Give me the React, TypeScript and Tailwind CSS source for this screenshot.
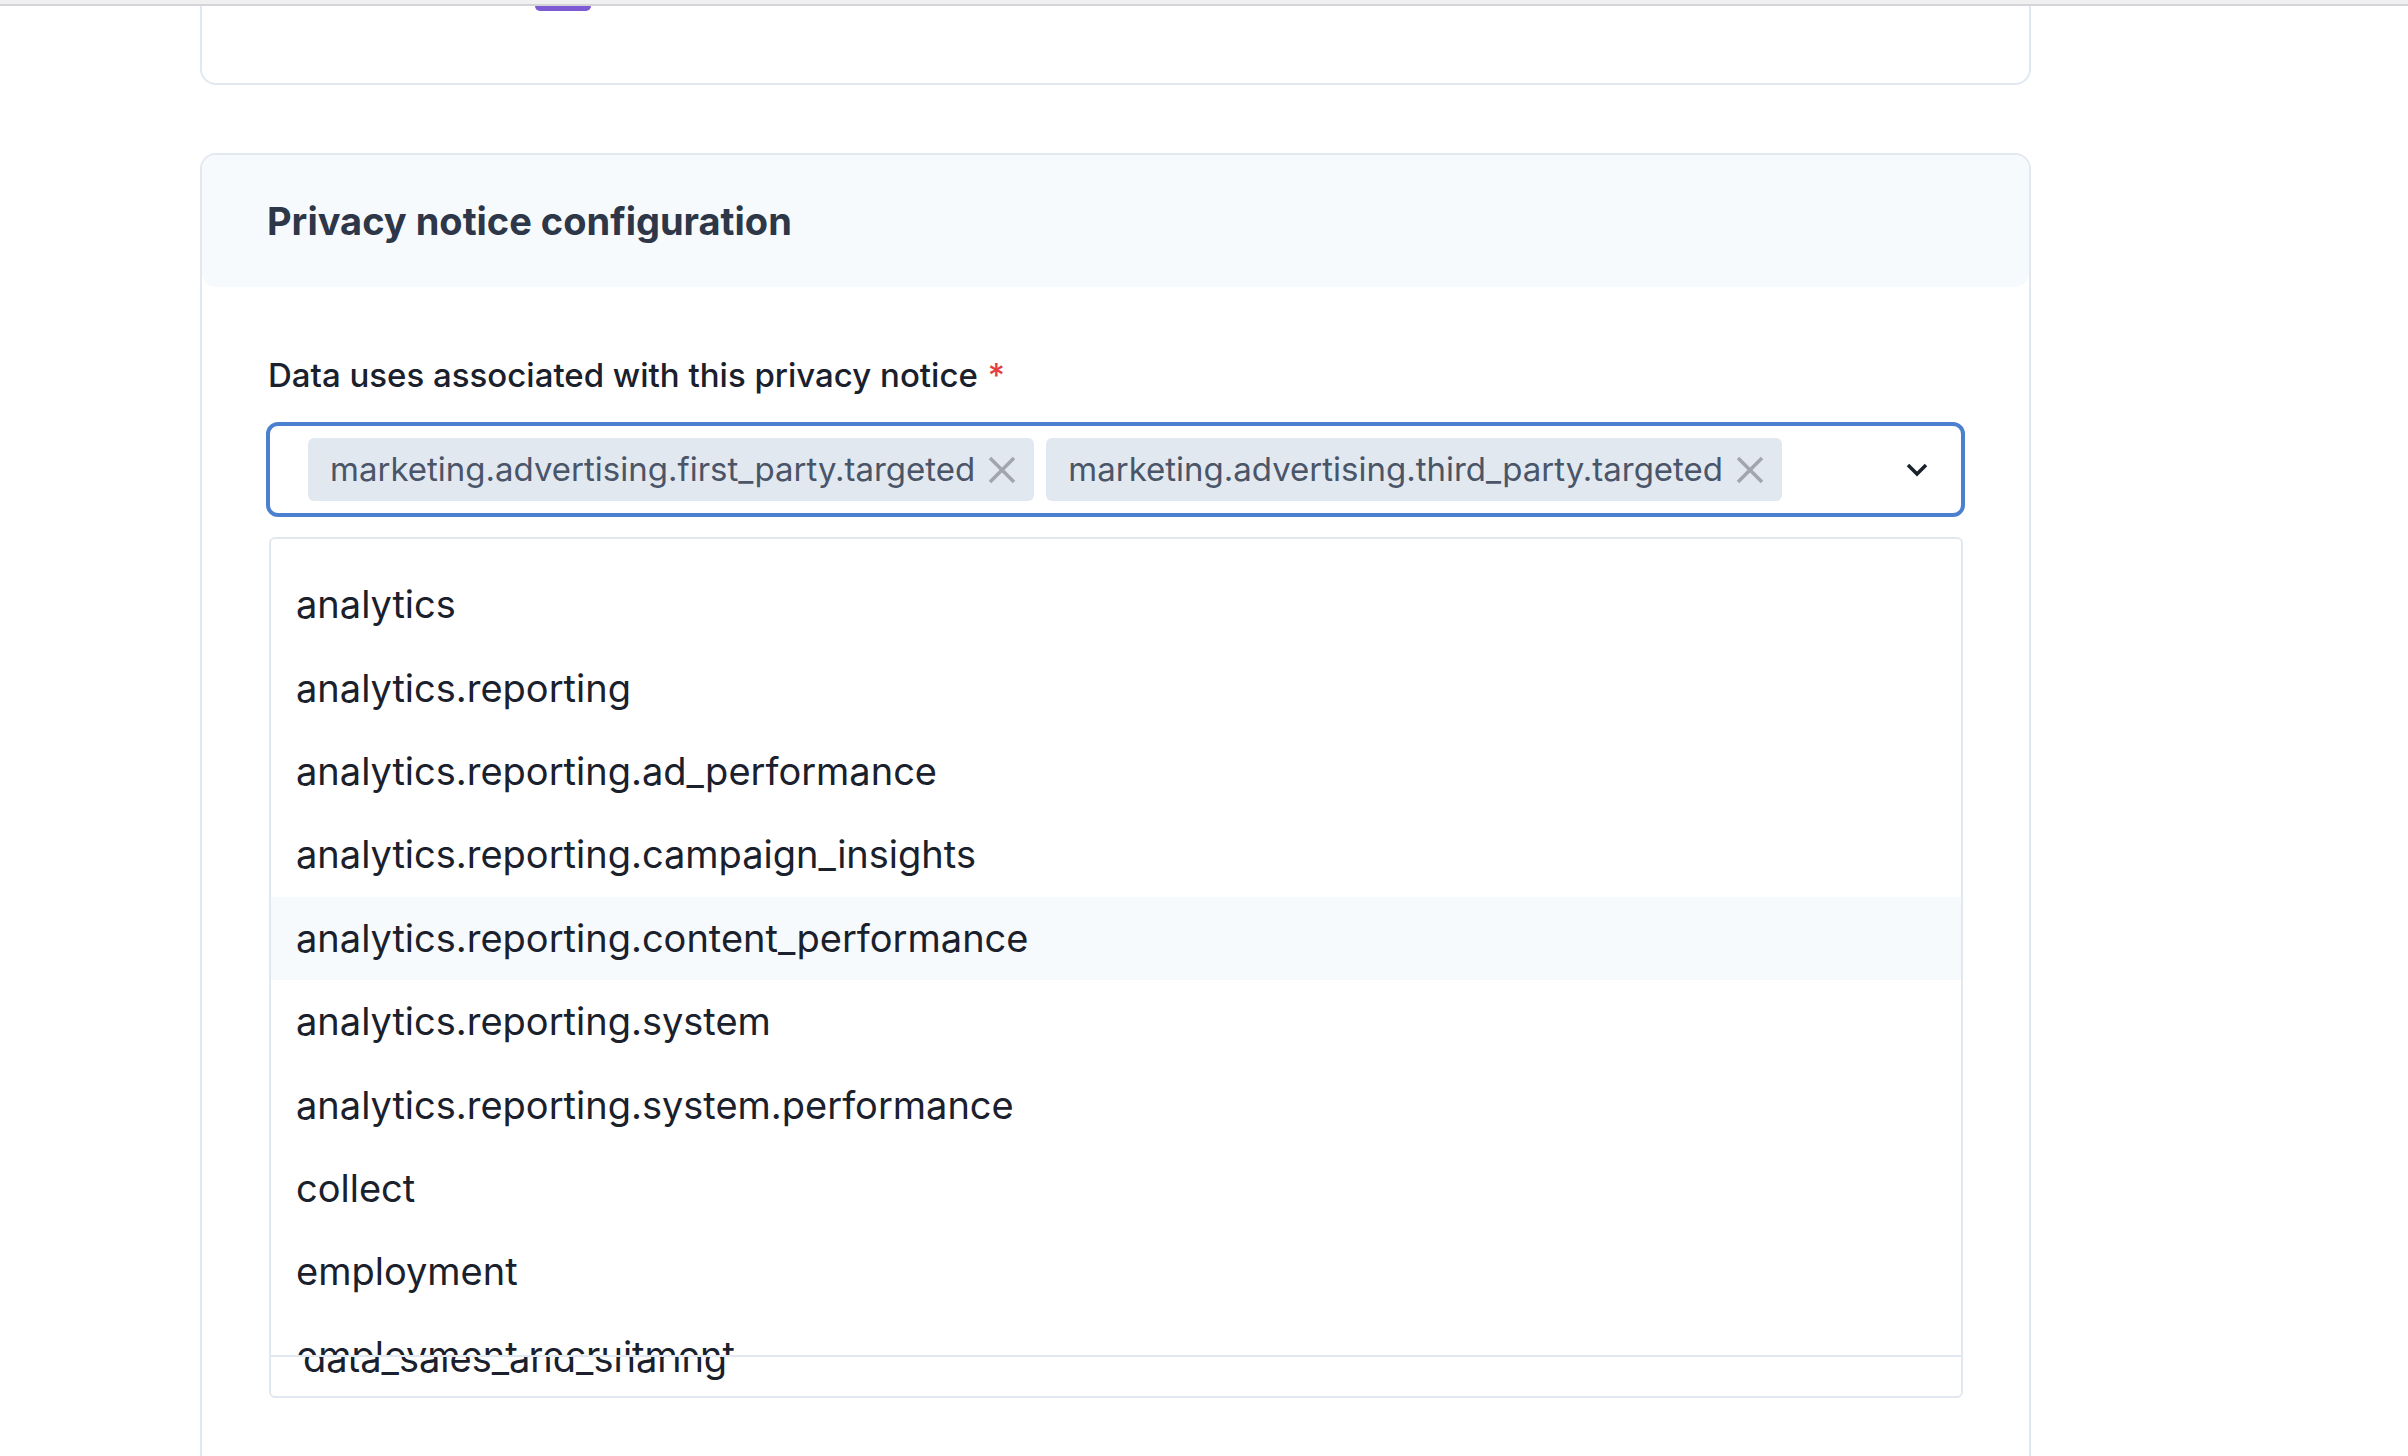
import React from "react";

const items = [
  "analytics",
  "analytics.reporting",
  "analytics.reporting.ad_performance",
  "analytics.reporting.campaign_insights",
  "analytics.reporting.content_performance",
  "analytics.reporting.system",
  "analytics.reporting.system.performance",
  "collect",
  "employment",
  "employment.recruitment",
];

function XIcon() {
  return (
    <svg width="28" height="28" viewBox="0 0 28 28" className="shrink-0">
      <path d="M2 2 L26 26 M26 2 L2 26" stroke="#a0a6b0" strokeWidth="3.5" strokeLinecap="butt" fill="none" />
    </svg>
  );
}

function Tag({ label }: { label: string }) {
  return (
    <div className="flex h-[63px] items-center gap-[13px] rounded-[6px] bg-[#e2e8f0] pl-[22px] pr-[18px]">
      <span className="text-[33px] leading-none text-[#4a5568]">{label}</span>
      <XIcon />
    </div>
  );
}

export default function App() {
  return (
    <div
      className="relative h-[1456px] w-full overflow-hidden bg-white"
      style={{ fontFamily: "Inter, 'Noto Sans', sans-serif" }}
    >
      <div className="h-[4px] w-full bg-[#f0f0f0]" />
      <div className="h-[2px] w-full bg-[#d4d4d8]" />
      <div className="w-[2031px] pl-[200px]">
        <div className="h-[79px] rounded-b-2xl border-x-2 border-b-2 border-[#e2e8f0]">
          <div className="ml-[333px] h-[5px] w-[56px] rounded-b-[10px] bg-[#7f5ad5]" />
        </div>

        <div className="mt-[68px] h-[1400px] rounded-2xl border-2 border-[#e2e8f0]">
          <div className="flex h-[132px] items-center rounded-[14px] bg-[#f7fafc] pl-[65px]">
            <h2 className="text-[38px] font-bold text-[#2d3748]">Privacy notice configuration</h2>
          </div>
          <div className="px-[64px] pt-[69px]">
            <div className="mb-[26px] flex h-[40px] items-center pl-[2px] text-[33px] font-medium text-[#1a202c]">
              Data uses associated with this privacy notice
              <span className="ml-[10px] text-[#e53e3e]">*</span>
            </div>
            <div className="flex h-[95px] items-center gap-[12px] rounded-[12px] border-4 border-[#4a80cf] pl-[38px] pr-[32px]">
              <Tag label="marketing.advertising.first_party.targeted" />
              <Tag label="marketing.advertising.third_party.targeted" />
              <svg width="24" height="16" viewBox="0 0 24 16" className="ml-auto">
                <path d="M3 3 L12 12 L21 3" stroke="#1a202c" strokeWidth="3.5" fill="none" />
              </svg>
            </div>
            <div className="ml-[3px] mr-[2px] mt-[20px] rounded-[6px] border-2 border-[#e2e8f0]">
              <div className="h-[816px] overflow-hidden pt-[24px]">
                {items.map((it, i) => (
                  <div
                    key={it}
                    className={`flex h-[83.4px] items-center pl-[25px] text-[38px] text-[#1a202c] ${
                      i === 4 ? "bg-[#f7fafc]" : ""
                    }`}
                  >
                    {it}
                  </div>
                ))}
              </div>
              <div className="h-[2px] bg-[#e2e8f0]" />
              <div className="h-[39px] overflow-hidden">
                <div className="-mt-[21px] pl-[32px] text-[38px] leading-[44px] text-[#1a202c]">
                  data_sales_and_sharing
                </div>
              </div>
            </div>
          </div>
        </div>
      </div>
    </div>
  );
}
